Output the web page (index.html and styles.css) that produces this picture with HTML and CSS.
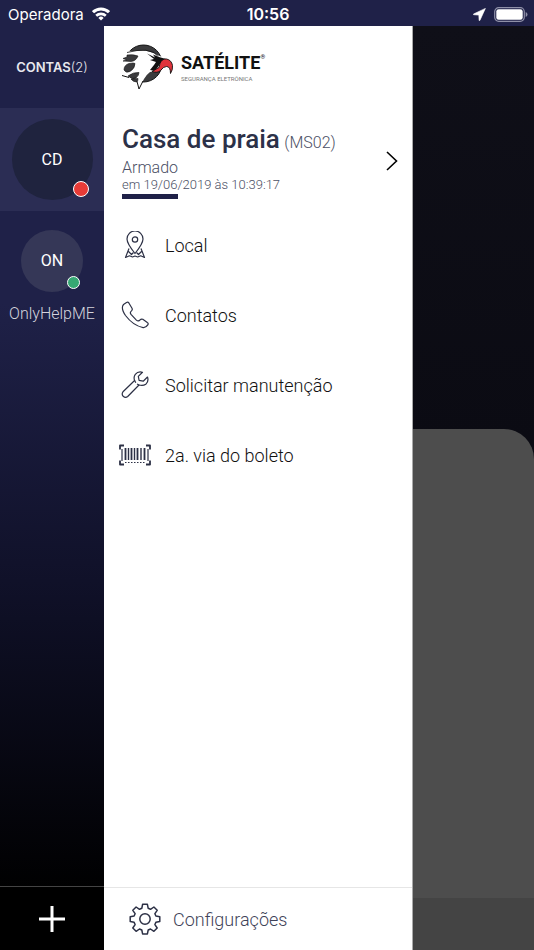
FILE: index.html
```html
<!DOCTYPE html>
<html lang="pt-BR">

<head>
  <meta charset="UTF-8">
  <meta name="viewport" content="width=device-width, initial-scale=1.0">
  <title>Satélite - Casa de praia</title>
  <link rel="stylesheet" href="styles.css">
</head>

<body>

  <header class="status-bar">
    <div class="operadora">
      <span>Operadora</span>
      <svg width="18" height="14" viewBox="0 0 18 14" fill="none" stroke="#fff" stroke-width="3">
        <path d="M1 5.2a11.4 11.4 0 0 1 16 0" />
        <path d="M4.2 8.8a6.9 6.9 0 0 1 9.6 0" stroke-width="2.6" />
        <path d="M9 13.5L6.4 10.9a3.7 3.7 0 0 1 5.2 0z" fill="#fff" stroke="none" />
      </svg>
    </div>
    <time class="hora">10:56</time>
    <div class="indicadores">
      <svg width="13" height="13" viewBox="0 0 13 13" fill="#fff">
        <path d="M12.4.4L.5 6q-.5.5.2.7l5.1.4.3 5.2q.3.7.8.1z" stroke="#fff" stroke-width=".6" />
      </svg>
      <svg width="34" height="15" viewBox="0 0 34 15">
        <rect x=".7" y=".7" width="29.6" height="13.6" rx="4" fill="none" stroke="#8f90a8" stroke-width="1.2" />
        <rect x="2.3" y="2.3" width="26.4" height="10.4" rx="2.3" fill="#fff" />
        <path d="M31.7 5v5q1.8-.8 1.8-2.5T31.7 5z" fill="#8f90a8" />
      </svg>
    </div>
  </header>

  <main class="app">
    <aside class="contas">
      <h2 class="contas-titulo">CONTAS<span>(2)</span></h2>

      <button class="conta conta-ativa">
        <span class="avatar avatar-grande">CD<i class="status status-vermelho"></i></span>
      </button>
      <button class="conta">
        <span class="avatar">ON<i class="status status-verde"></i></span>
        <span class="conta-nome">OnlyHelpME</span>
      </button>

      <button class="adicionar" aria-label="Adicionar conta">
        <svg width="26" height="26" viewBox="0 0 26 26" stroke="#fff" stroke-width="3">
          <path d="M13 0v26M0 13h26" />
        </svg>
      </button>
    </aside>

    <section class="painel">
      <div class="logo">
        <svg width="52" height="48" viewBox="0 0 52 48">
          <circle cx="21.500" cy="20.500" r="18.500" fill="#3b3b3d" stroke="#111" />
          <!-- cabeça -->
          <path d="M-1 8.500Q12 8 21 7.500q8 .5 14 4.500l8 3-5 12-10 2q-4 3-6 7l-5 9-3-2-3-3-6-1-6-5z" fill="#fff" />
          <path d="M5 9.500l10-2q9-1.500 17 2l4 4" fill="none" stroke="#111" stroke-width=".8" />
          <path d="M5 12q6-1 11 1-2 5-7 5.500l-8-.5 4-1-4-1.500L5 14z" fill="#3b3b3d" stroke="#111" stroke-width=".6" />
          <path d="M2 27q0-5 5-6.500 5-1 6 0 0 5-5 8-4 2-6-1.500z" fill="#3b3b3d" stroke="#111" stroke-width=".6" />
          <path d="M6 33q5-4 11-3.500 0 3-3 5.500-4 2-8-2zM9 36l7-.5q0 2-1 3.500-4 0-6-3z" fill="#3b3b3d" stroke="#111" stroke-width=".6" />
          <path d="M0 32.500l7 2M15 38.500L17 46l4-8" fill="none" stroke="#111" />
          <!-- olho e bico -->
          <path d="M25 10.500l8 4-2-3 6 2.500 7 2-6 5-5 7-5-1 4-5 2-3-6-2 4-1z" fill="#111" />
          <path d="M30 28.500l7-4 1-4q2-5 6.500-4.500 5 1 6 6.500 .5 4-2 8 0-7-4-7-3 0-6 4-3 3-8.500 1z" fill="#e0343c" stroke="#111" stroke-width=".9" />
        </svg>
        <div class="marca">
          <strong>SATÉLITE<sup>®</sup></strong>
          <small>SEGURANÇA ELETRÔNICA</small>
        </div>
      </div>

      <a href="#" class="local-atual">
        <div>
          <h1>Casa de praia <span>(MS02)</span></h1>
          <p class="estado">Armado</p>
          <p class="data">em 19/06/2019 às 10:39:17</p>
          <div class="barra"></div>
        </div>
        <svg width="12" height="20" viewBox="0 0 12 20" fill="none" stroke="#000" stroke-width="1.6">
          <path d="M1 1l9.5 9L1 19" />
        </svg>
      </a>

      <nav class="menu">
        <a href="#">
          <svg class="icone" viewBox="0 0 34 28">
            <path d="M17 22.500q-8-10-8-14.500a8 8 0 0 1 16 0Q25 12.500 17 22.500z" />
            <circle cx="17" cy="8.500" r="2.700" />
            <path d="M11 17.500L7.500 26.500l4-1.700 3 1.200 2.500-1 2.700 1 3-1.200 3.800 1.700L23 17.500M10.500 20.500l3 3 2-2M23.500 20.500l-3 3-2-2" />
          </svg>
          Local
        </a>
        <a href="#">
          <svg class="icone" viewBox="0 0 34 28">
            <path d="M5.500 3.500L8.500 1.500q1.500-.8 2.500.7l3 5q.8 1.500-.5 2.700-2 1.600-.5 3.500l5.400 5.700q2 1.700 3.700-.3 1.100-1.200 2.700-.5l4.500 3.200q1.500 1 .5 2.400-2 3-4.700 2.700Q15 24.500 7.500 14.500 2.500 7 5.500 3.500z" />
          </svg>
          Contatos
        </a>
        <a href="#">
          <svg class="icone" viewBox="0 0 34 28">
            <path d="M24.500 1.300q-4.500-1.200-7.200 2-2 2.700-.7 6.200L5 20.800q-1.700 2.200.2 4.500 2.300 2 4.500.2L21 14q4 1.200 6.800-.8 3.200-2.900 1.700-7.200l-4.300 4.200-4.100-.8-.8-4z" />
            <path d="M16.600 9.500l1.200 2.200M21 14l-2-1" />
          </svg>
          Solicitar manutenção
        </a>
        <a href="#">
          <svg class="icone" viewBox="0 0 34 28">
            <path d="M6 4.500H2v4M2 19.500v4h4M28 4.500h4v4M32 19.500v4h-4" stroke-width="1.800" />
            <path d="M4 8v12M30 8v12" />
            <path d="M7.500 7v12M13.500 7v12M19.500 7v12M26.500 7v12" stroke-width="1.800" />
            <path d="M10.500 7v12M16.500 7v12M23 7v12" stroke-width="1.400" />
            <path d="M7 21.500h21" stroke-dasharray="1.500 1.500" />
          </svg>
          2a. via do boleto
        </a>
      </nav>

      <a href="#" class="configuracoes">
        <svg width="32" height="32" viewBox="0 0 32 32" fill="none" stroke="#2c3045" stroke-width="1.500" stroke-linejoin="round">
          <path d="M13.600 1.300h4.800l.8 4 2.300 1 3.400-2.300 3.300 3.300-2.300 3.400 1 2.300 3.900.8v4.700l-3.900.8-1 2.300 2.300 3.400-3.300 3.300-3.400-2.300-2.300 1-.8 3.900h-4.800l-.8-3.900-2.300-1-3.400 2.300L3.800 25l2.300-3.400-1-2.300-3.900-.8v-4.700l3.900-.8 1-2.300-2.300-3.400L7.100 4l3.400 2.300 2.300-1z" />
          <circle cx="16" cy="16" r="5.200" />
        </svg>
        Configurações
      </a>
    </section>

    <div class="fundo">
      <div class="folha">
        <div class="folha-rodape"></div>
      </div>
    </div>
  </main>

</body>

</html>
```
FILE: styles.css
```css
* {
  box-sizing: border-box;
}

body {
  margin: 0;
  min-height: 100vh;
  display: flex;
  flex-direction: column;
  font-family: Roboto, sans-serif;
  font-weight: 300;
  background-color: #1f2148;
}

h1,
h2,
p {
  margin: 0;
  font-weight: 300;
}

a {
  color: inherit;
  text-decoration: none;
}

button {
  border: none;
  padding: 0;
  background: none;
  color: white;
  font: inherit;
  cursor: pointer;
}

svg {
  display: block;
  flex-shrink: 0;
}

.status-bar {
  display: grid;
  grid-template-columns: 1fr auto 1fr;
  align-items: center;
  height: 26px;
  padding: 2px 6px 0 8px;
  color: white;
  font-family: Inter, sans-serif;
  font-size: 15px;
}

.operadora,
.indicadores {
  display: flex;
  align-items: center;
  gap: 8px;
  font-weight: 400;
}

.indicadores {
  justify-content: flex-end;
}

.hora {
  font-size: 16px;
  font-weight: 600;
}

.app {
  flex: 1;
  display: grid;
  grid-template-columns: 104fr 309fr 121fr;
}

.contas {
  display: flex;
  flex-direction: column;
  background: linear-gradient(#1f2148 0%, #1f2148 30%, #101129 60%, #000 94%);
  color: white;
}

.contas-titulo {
  height: 82px;
  line-height: 82px;
  text-align: center;
  font-family: Inter, sans-serif;
  font-size: 13px;
  font-weight: 600;
  color: #e8e8ee;
}

.contas-titulo span {
  font-weight: 300;
}

.conta {
  display: flex;
  flex-direction: column;
  align-items: center;
  gap: 12px;
  padding-top: 19px;
}

.conta-ativa {
  padding: 11px 0;
  background-color: #2b2d54;
}

.avatar {
  position: relative;
  width: 62px;
  height: 62px;
  line-height: 62px;
  border-radius: 50%;
  background-color: #353757;
  font-size: 16px;
  font-weight: 400;
}

.avatar-grande {
  width: 81px;
  height: 81px;
  line-height: 81px;
  background-color: #1f233e;
}

.status {
  position: absolute;
  right: 3px;
  bottom: 3px;
  width: 13px;
  height: 13px;
  border: 1px solid white;
  border-radius: 50%;
}

.status-vermelho {
  right: 4px;
  width: 16px;
  height: 16px;
  background-color: #e73b37;
}

.status-verde {
  background-color: #36a873;
}

.conta-nome {
  font-size: 16px;
  line-height: 20px;
  color: #d4d4dd;
}

.adicionar {
  display: flex;
  align-items: center;
  justify-content: center;
  height: 64px;
  margin-top: auto;
  border-top: 1px solid #444;
  background-color: black;
}

.painel {
  display: flex;
  flex-direction: column;
  background-color: white;
  border-right: 1px solid #aaa;
}

.logo {
  display: flex;
  align-items: center;
  gap: 7px;
  padding: 17px 18px 0;
}

.marca {
  display: flex;
  flex-direction: column;
}

.marca strong {
  font-size: 18px;
  line-height: 24px;
  font-weight: 700;
  color: #111;
}

.marca sup {
  font-size: 6px;
  line-height: 6px;
  vertical-align: 10px;
  font-weight: 400;
}

.marca small {
  font-size: 6px;
  line-height: 8px;
  font-weight: 400;
  color: #777;
}

.local-atual {
  display: flex;
  align-items: center;
  justify-content: space-between;
  padding: 32px 14px 0 18px;
  color: #4b4f65;
}

.local-atual h1 {
  font-size: 26px;
  line-height: 33px;
  font-weight: 500;
  color: #2c3148;
}

.local-atual h1 span {
  margin-left: -2px;
  font-size: 16px;
  font-weight: 300;
  color: #4b4f65;
}

.estado {
  font-size: 16px;
  line-height: 18px;
}

.data {
  font-size: 13px;
  line-height: 16px;
}

.barra {
  width: 56px;
  height: 5px;
  margin-top: 1px;
  background-color: #1f2148;
}

.menu {
  display: flex;
  flex-direction: column;
  padding: 11px 14px;
}

.menu a {
  display: flex;
  align-items: center;
  gap: 13px;
  height: 70px;
  font-size: 18px;
  color: #111;
}

.icone {
  width: 34px;
  height: 28px;
  fill: none;
  stroke: #2c3045;
  stroke-width: 1.2;
  stroke-linejoin: round;
}

.configuracoes {
  display: flex;
  align-items: center;
  gap: 12px;
  height: 63px;
  margin-top: auto;
  padding-left: 25px;
  border-top: 1px solid #e6e6e6;
  font-size: 18px;
  color: #3f4359;
}

.fundo {
  display: flex;
  flex-direction: column;
  justify-content: flex-end;
  background: linear-gradient(#0f0f18, #0b0b13 45%);
}

.folha {
  display: flex;
  flex-direction: column;
  justify-content: flex-end;
  height: 56.4%;
  border-top-right-radius: 30px;
  background-color: #4d4d4d;
}

.folha-rodape {
  height: 52px;
  background-color: #444;
}
```
